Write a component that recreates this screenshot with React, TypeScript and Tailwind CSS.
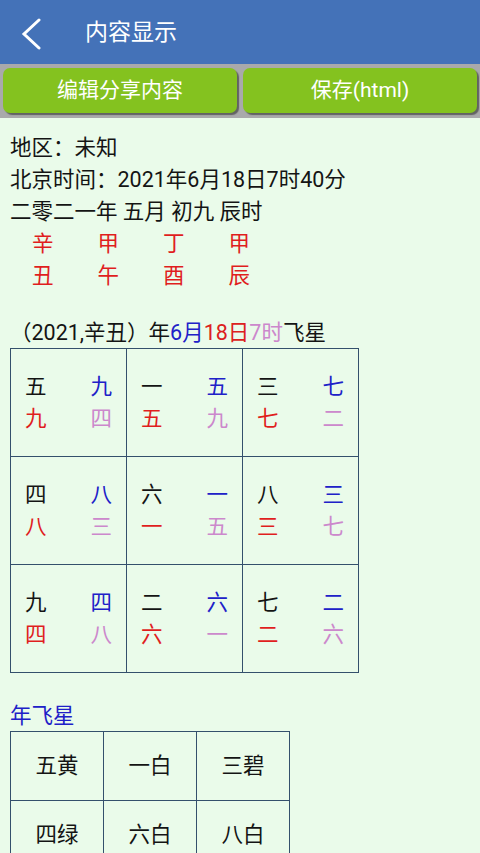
const FONT = "font-['Roboto','Noto_Sans_CJK_SC',sans-serif]";

type Cell = [string, string, string, string];

const grid: Cell[] = [
  ['五', '九', '九', '四'],
  ['一', '五', '五', '九'],
  ['三', '七', '七', '二'],
  ['四', '八', '八', '三'],
  ['六', '一', '一', '五'],
  ['八', '三', '三', '七'],
  ['九', '四', '四', '八'],
  ['二', '六', '六', '一'],
  ['七', '二', '二', '六'],
];

const yearStars = ['五黄', '一白', '三碧', '四绿', '六白', '八白', '九紫', '二黑', '七赤'];

export default function App() {
  return (
    <div className={`min-h-screen bg-[#eafbea] ${FONT}`}>
      {/* top bar */}
      <div className="h-[64px] bg-[#4472b8] flex items-center pt-[3px] text-white">
        <svg className="ml-[20px] w-[24px] h-[32px]" viewBox="0 0 24 32" fill="none" stroke="currentColor" strokeWidth="3" strokeLinecap="round">
          <polyline points="19,2 4,16 19,30" />
        </svg>
        <span className="ml-[41px] text-[23px]">内容显示</span>
      </div>

      {/* actions */}
      <div className="h-[54px] bg-[#a9a9ab] flex gap-[6px] pl-[3px] pr-[3px] pt-[4px]">
        <button className="flex-1 h-[45px] rounded-[7px] bg-[#84c21f] text-white text-[21px] shadow-[2px_2px_1px_rgba(40,40,40,0.55)]">
          编辑分享内容
        </button>
        <button className="flex-1 h-[45px] rounded-[7px] bg-[#84c21f] text-white text-[21px] shadow-[2px_2px_1px_rgba(40,40,40,0.55)]">
          保存(html)
        </button>
      </div>

      <div className="pl-[10px] pt-[14px] text-[21.5px] leading-[32px] text-[#141414]">
        <div>地区：未知</div>
        <div>北京时间：2021年6月18日7时40分</div>
        <div>二零二一年 五月 初九 辰时</div>
        <div className="flex text-[#e01e1e]">
          {['辛', '甲', '丁', '甲'].map((c, i) => (
            <span key={i} className="w-[65.5px] pl-[22px]">{c}</span>
          ))}
        </div>
        <div className="flex text-[#e01e1e]">
          {['丑', '午', '酉', '辰'].map((c, i) => (
            <span key={i} className="w-[65.5px] pl-[22px]">{c}</span>
          ))}
        </div>

        <div className="mt-[25px] leading-[31px]">
          （2021,辛丑）年<span className="text-[#2020c8]">6月</span>
          <span className="text-[#dc2020]">18日</span>
          <span className="text-[#cc88cc]">7时</span>飞星
        </div>

        <div className="w-[349px] grid grid-cols-3 gap-px p-px bg-[#34506c]">
          {grid.map((c, i) => (
            <div key={i} className="h-[107px] bg-[#eafbea] flex flex-col justify-center px-[14px]">
              <div className="flex justify-between">
                <span className="text-[#141414]">{c[0]}</span>
                <span className="text-[#2020c8]">{c[1]}</span>
              </div>
              <div className="flex justify-between">
                <span className="text-[#e01e1e]">{c[2]}</span>
                <span className="text-[#cc88cc]">{c[3]}</span>
              </div>
            </div>
          ))}
        </div>

        <div className="mt-[27px] leading-[31px] text-[#2020c8]">年飞星</div>
        <div className="w-[280px] grid grid-cols-3 gap-px p-px bg-[#34506c]">
          {yearStars.map((s, i) => (
            <div key={i} className="h-[68px] bg-[#eafbea] flex items-center justify-center">
              {s}
            </div>
          ))}
        </div>
        <div className="h-[20px]" />
      </div>
    </div>
  );
}
